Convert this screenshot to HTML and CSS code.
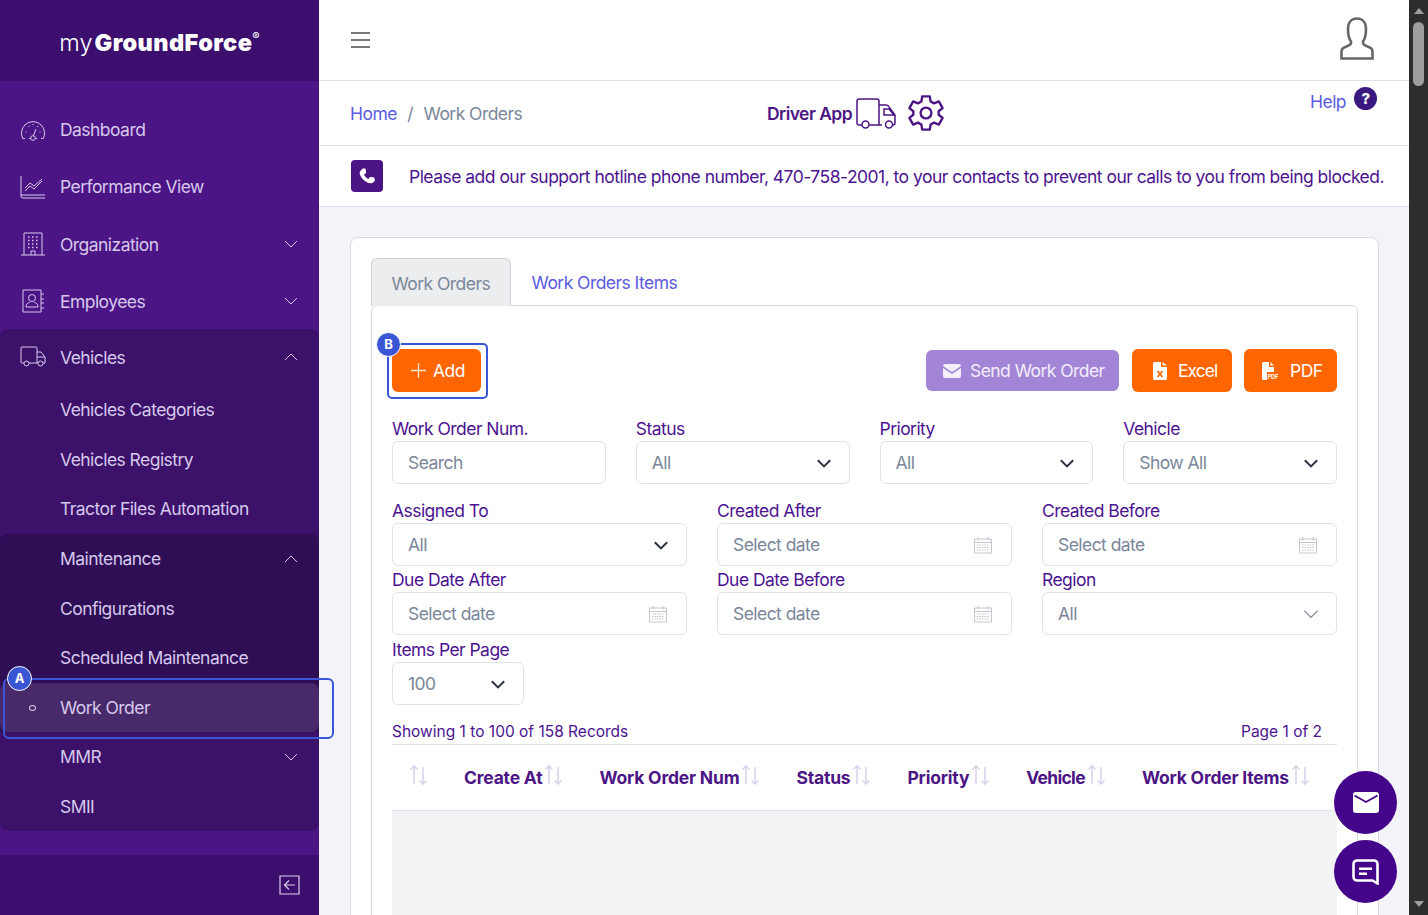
FILE: index.html
```html
<!DOCTYPE html>
<html lang="en">
<head>
    <meta charset="UTF-8">
    <meta name="viewport" content="width=device-width, initial-scale=1.0">
    <title>Work Orders</title>
    <link rel="stylesheet" href="styles.css">
</head>
<body>
    <!-- shared icons -->
    <svg class="defs" width="0" height="0">
        <symbol id="i-down" viewBox="0 0 16 16"><path d="M2 5l6 6 6-6" fill="none" stroke="currentColor" stroke-width="1"/></symbol>
        <symbol id="i-up" viewBox="0 0 16 16"><path d="M2 11l6-6 6 6" fill="none" stroke="currentColor" stroke-width="1"/></symbol>
        <symbol id="i-select" viewBox="0 0 16 16"><path d="M2.5 5.5L8 11l5.5-5.5" fill="none" stroke="currentColor" stroke-width="1.8"/></symbol>
        <symbol id="i-sort" viewBox="0 0 19 21"><path d="M5 20V2M1.500 5.500L5 2l3.500 3.500" fill="none" stroke="#ddd2ec" stroke-width="1.600"/><path d="M14 3v17M10.500 16.500L14 20l3.500-3.500" fill="none" stroke="#ddd2ec" stroke-width="1.600"/></symbol>
        <symbol id="i-cal" viewBox="0 0 20 18"><path d="M1.500 3h17v14h-17zM1.500 6.500h17M5 1v3.500M15 1v3.500" fill="none" stroke="#c4c6cc"/><path d="M4 9h12M4 11.500h12M4 14h12" stroke="#c4c6cc" stroke-dasharray="1.500 1"/></symbol>
    </svg>

    <div class="app">
        <aside class="sidebar">
            <div class="logo">
                <span class="logo-my">my</span><span class="logo-name">GroundForce</span><sup class="logo-reg">®</sup>
            </div>

            <nav class="nav">
                <a class="nav-item tall">
                    <svg class="nav-icon" viewBox="0 0 26 24"><path d="M5 20.500H2.800A11.500 11.500 0 1 1 23.200 20.500H21M9 20.500h1.500M15.500 20.500H17M13.500 17.500l2.500-6.500" fill="none" stroke="currentColor"/><circle cx="13" cy="20" r="2.300" fill="none" stroke="currentColor"/><path d="M5.500 14h1M8.500 8.500h1M19.500 14h1M12.500 6.500h1M17 8.500h1" stroke="currentColor" stroke-width="1.200"/></svg>
                    <span>Dashboard</span>
                </a>
                <a class="nav-item tall">
                    <svg class="nav-icon" viewBox="0 0 26 24"><path d="M1 1v20a2 2 0 0 0 2 2h22M1 20h24M5 16l5-5 4 3 8-8M5 13l5-5 4 3 8-7" fill="none" stroke="currentColor"/></svg>
                    <span>Performance View</span>
                </a>
                <a class="nav-item tall">
                    <svg class="nav-icon" viewBox="0 0 26 24"><path d="M4 23V1h18v22M1 23h24M11 23v-4h4v4" fill="none" stroke="currentColor"/><path d="M8 5h10M8 8.500h10M8 12h10M8 15.500h10" stroke="currentColor" stroke-width="1.300" stroke-dasharray="1.500 2.500"/></svg>
                    <span>Organization</span>
                    <svg class="caret"><use href="#i-down"/></svg>
                </a>
                <a class="nav-item tall">
                    <svg class="nav-icon" viewBox="0 0 26 24"><path d="M3 1h18v22H3zM21 5h3M21 10h3M21 14h3M21 19h3" fill="none" stroke="currentColor"/><circle cx="12" cy="9" r="3.500" fill="none" stroke="currentColor"/><path d="M6 18c0-4 3-4 4-5M18 18c0-4-3-4-4-5M6 18h12" fill="none" stroke="currentColor"/></svg>
                    <span>Employees</span>
                    <svg class="caret"><use href="#i-down"/></svg>
                </a>

                <div class="nav-group">
                    <a class="nav-item head">
                        <svg class="nav-icon" viewBox="0 0 26 24"><path d="M4 18H2a1 1 0 0 1-1-1V3a1 1 0 0 1 1-1h14a1 1 0 0 1 1 1v15H9M17 7h4l4 5v6h-2M17 18h1M17 12h8" fill="none" stroke="currentColor"/><circle cx="6.500" cy="18.500" r="2.500" fill="none" stroke="currentColor"/><circle cx="20.500" cy="18.500" r="2.500" fill="none" stroke="currentColor"/></svg>
                        <span>Vehicles</span>
                        <svg class="caret"><use href="#i-up"/></svg>
                    </a>
                    <a class="nav-item sub">Vehicles Categories</a>
                    <a class="nav-item sub">Vehicles Registry</a>
                    <a class="nav-item sub">Tractor Files Automation</a>

                    <div class="nav-nested">
                        <a class="nav-item sub">
                            <span>Maintenance</span>
                            <svg class="caret"><use href="#i-up"/></svg>
                        </a>
                        <a class="nav-item sub">Configurations</a>
                        <a class="nav-item sub">Scheduled Maintenance</a>
                        <a class="nav-item sub active">
                            <i class="dot"></i>
                            <span>Work Order</span>
                            <b class="marker marker-a"></b>
                            <b class="badge badge-a">A</b>
                        </a>
                    </div>

                    <a class="nav-item sub">
                        <span>MMR</span>
                        <svg class="caret"><use href="#i-down"/></svg>
                    </a>
                    <a class="nav-item sub">SMII</a>
                </div>
            </nav>

            <div class="sidebar-foot">
                <svg width="21" height="20" viewBox="0 0 21 20"><path d="M1 1h19v18H1zM16 10H6M10 5.500L5.500 10l4.500 4.500" fill="none" stroke="#d9cdee" stroke-width="1.200"/></svg>
            </div>
        </aside>

        <main class="main">
            <header class="topbar">
                <div class="burger"><i></i><i></i><i></i></div>
                <svg class="user" width="34" height="43" viewBox="0 0 34 43"><path d="M1.500 41.500v-7c0-3 2-3.800 6-5.500 3-1.300 4-2 3.500-4.500C8.500 21 8 17 8 12c0-7 4-10.500 9-10.500S26 5 26 12c0 5-.5 9-3 12.500-.5 2.500.5 3.200 3.500 4.500 4 1.700 6 2.500 6 5.500v7z" fill="none" stroke="#666" stroke-width="2.600"/></svg>
            </header>

            <div class="crumbs-bar">
                <div class="crumbs">
                    <a class="link">Home</a>
                    <span class="sep">/</span>
                    <span class="current">Work Orders</span>
                </div>
                <div class="driver">
                    <b>Driver App</b>
                    <svg width="41" height="31" viewBox="0 0 41 31"><path d="M6 27H3a2 2 0 0 1-2-2V3a2 2 0 0 1 2-2h18a2 2 0 0 1 2 2v24H13M23 7h7a3 3 0 0 1 3 2l6 8v8a2 2 0 0 1-2 2M23 27h3M28 11h5l5 6H28z" fill="none" stroke="#4c1585" stroke-width="1.500"/><circle cx="9.500" cy="26.500" r="3.500" fill="none" stroke="#4c1585" stroke-width="1.500"/><circle cx="33" cy="26.500" r="3.500" fill="none" stroke="#4c1585" stroke-width="1.500"/></svg>
                    <svg class="gear" width="38" height="38" viewBox="0 0 24 24"><path d="M9.600 1.500h4.800l.5 3.200 2.200 1.200 3-1.200 2.400 4.200-2.500 2v2.200l2.500 2-2.400 4.200-3-1.200-2.200 1.200-.5 3.200H9.600l-.5-3.200-2.200-1.200-3 1.200-2.400-4.200 2.500-2v-2.200l-2.500-2 2.400-4.200 3 1.200 2.200-1.200z" fill="none" stroke="#4c1585" stroke-width="1.500" stroke-linejoin="round"/><circle cx="12" cy="12" r="3.400" fill="none" stroke="#4c1585" stroke-width="1.500"/></svg>
                </div>
                <div class="help">
                    <a class="link">Help</a>
                    <span class="help-icon">?</span>
                </div>
            </div>

            <div class="notice">
                <span class="notice-icon">
                    <svg width="18" height="18" viewBox="0 0 24 24"><path d="M6.600 1.500l3 .8c.5.2.8.6.8 1.100l.3 4.100c0 .4-.2.800-.5 1L8 9.900c1 2.600 3.300 5 6 6.100l1.500-2.200c.2-.3.600-.5 1-.5l4.100.3c.5 0 .9.300 1.100.8l.8 3c.2.700-.1 1.400-.7 1.800l-2.800 2c-.7.500-1.600.7-2.400.5C9.500 20.400 3.700 14.600 2.300 8.500c-.2-.8 0-1.700.5-2.400l2-2.800c.4-.6 1.100-1 1.800-.8z" fill="#fff"/></svg>
                </span>
                <span>Please add our support hotline phone number, 470-758-2001, to your contacts to prevent our calls to you from being blocked.</span>
            </div>

            <div class="content">
                <section class="card">
                    <div class="tabs">
                        <a class="tab tab-on">Work Orders</a>
                        <a class="tab link">Work Orders Items</a>
                    </div>

                    <div class="pane">
                        <div class="actions">
                            <button class="btn btn-add">
                                <svg width="17" height="17" viewBox="0 0 17 17"><path d="M8.500 1v15M1 8.500h15" stroke="#ffe6d2" stroke-width="1.300"/></svg>
                                Add
                                <b class="marker marker-b"></b>
                                <b class="badge badge-b">B</b>
                            </button>
                            <div class="actions-right">
                                <button class="btn btn-send">
                                    <svg width="18" height="14" viewBox="0 0 18 14"><path d="M2 0h14a2 2 0 0 1 2 2L9 8 0 2a2 2 0 0 1 2-2zM0 4l9 6 9-6v8a2 2 0 0 1-2 2H2a2 2 0 0 1-2-2z" fill="#f4effb"/></svg>
                                    Send Work Order
                                </button>
                                <button class="btn btn-excel">
                                    <svg width="14" height="18" viewBox="0 0 14 18"><path d="M1.500 0H8v5h6v11.500a1.500 1.500 0 0 1-1.500 1.500h-11A1.500 1.500 0 0 1 0 16.500v-15A1.500 1.500 0 0 1 1.500 0zM9.500 0L14 3.500H9.500z" fill="#fff"/><path d="M4.500 9l5 6M9.500 9l-5 6" stroke="#ff6600" stroke-width="1.600"/></svg>
                                    Excel
                                </button>
                                <button class="btn btn-pdf">
                                    <svg width="18" height="18" viewBox="0 0 18 18"><path d="M1.500 0H7v5h5v5H5v8H1.500A1.500 1.500 0 0 1 0 16.500v-15A1.500 1.500 0 0 1 1.500 0zM8.500 0L12 3.500H8.500z" fill="#fff"/><text x="5.500" y="16.500" font-size="5.500" font-weight="700" letter-spacing="0" fill="#fff">PDF</text></svg>
                                    PDF
                                </button>
                            </div>
                        </div>

                        <div class="filters cols-4">
                            <div class="field"><label>Work Order Num.</label><div class="control">Search</div></div>
                            <div class="field"><label>Status</label><div class="control">All<svg class="arrow"><use href="#i-select"/></svg></div></div>
                            <div class="field"><label>Priority</label><div class="control">All<svg class="arrow"><use href="#i-select"/></svg></div></div>
                            <div class="field"><label>Vehicle</label><div class="control">Show All<svg class="arrow"><use href="#i-select"/></svg></div></div>
                        </div>
                        <div class="filters cols-3">
                            <div class="field"><label>Assigned To</label><div class="control">All<svg class="arrow"><use href="#i-select"/></svg></div></div>
                            <div class="field"><label>Created After</label><div class="control">Select date<svg class="cal"><use href="#i-cal"/></svg></div></div>
                            <div class="field"><label>Created Before</label><div class="control">Select date<svg class="cal"><use href="#i-cal"/></svg></div></div>
                            <div class="field"><label>Due Date After</label><div class="control">Select date<svg class="cal"><use href="#i-cal"/></svg></div></div>
                            <div class="field"><label>Due Date Before</label><div class="control">Select date<svg class="cal"><use href="#i-cal"/></svg></div></div>
                            <div class="field"><label>Region</label><div class="control">All<svg class="arrow thin"><use href="#i-down"/></svg></div></div>
                            <div class="field per-page"><label>Items Per Page</label><div class="control">100<svg class="arrow"><use href="#i-select"/></svg></div></div>
                        </div>

                        <div class="records">
                            <span>Showing 1 to 100 of 158 Records</span>
                            <span>Page 1 of 2</span>
                        </div>

                        <div class="thead">
                            <div class="th"><svg class="sort"><use href="#i-sort"/></svg></div>
                            <div class="th">Create At<svg class="sort"><use href="#i-sort"/></svg></div>
                            <div class="th">Work Order Num<svg class="sort"><use href="#i-sort"/></svg></div>
                            <div class="th">Status<svg class="sort"><use href="#i-sort"/></svg></div>
                            <div class="th">Priority<svg class="sort"><use href="#i-sort"/></svg></div>
                            <div class="th th-vehicle">Vehicle<svg class="sort"><use href="#i-sort"/></svg></div>
                            <div class="th">Work Order Items<svg class="sort"><use href="#i-sort"/></svg></div>
                        </div>
                        <div class="tbody"></div>
                    </div>
                </section>
            </div>

            <div class="fabs">
                <a class="fab">
                    <svg width="26" height="21" viewBox="0 0 26 21"><path d="M3 0h20a3 3 0 0 1 3 3v15a3 3 0 0 1-3 3H3a3 3 0 0 1-3-3V3a3 3 0 0 1 3-3z" fill="#fff"/><path d="M1.500 3.500L13 10l11.500-6.500" fill="none" stroke="#44058a" stroke-width="1.800"/></svg>
                </a>
                <a class="fab">
                    <svg width="27" height="26" viewBox="0 0 27 26"><path d="M5 1.500h17A3.500 3.500 0 0 1 25.500 5v19.500l-5-3H5A3.500 3.500 0 0 1 1.500 18V5A3.500 3.500 0 0 1 5 1.500z" fill="none" stroke="#fff" stroke-width="2.600"/><path d="M7 8.500h13v2.500H7zM7 13.500h8V16H7z" fill="#fff"/></svg>
                </a>
            </div>
        </main>

        <div class="scrollbar">
            <i class="arrow-up"></i>
            <i class="thumb"></i>
            <i class="arrow-down"></i>
        </div>
    </div>
</body>
</html>
```

FILE: styles.css
```css
* {
    margin: 0;
    padding: 0;
    box-sizing: border-box;
}

html, body {
    height: 100%;
    overflow: hidden;
}

body {
    font-family: Inter, "Noto Sans", sans-serif;
    font-size: 17.5px;
    letter-spacing: -0.55px;
    background: #f2f4f9;
}

.defs {
    position: absolute;
}

.app {
    display: flex;
    height: 915px;
}

/* Sidebar */
.sidebar {
    width: 319px;
    flex-shrink: 0;
    height: 915px;
    display: flex;
    flex-direction: column;
    background: #4c1585;
    color: #d6c9ec;
    position: relative;
    z-index: 2;
}

.logo {
    height: 81px;
    background: #3c0f6e;
    color: white;
    display: flex;
    justify-content: center;
    align-items: center;
    padding-top: 3px;
    letter-spacing: 0;
}

.logo-my {
    font-size: 23.5px;
    font-weight: 300;
}

.logo-name {
    font-size: 23.5px;
    font-weight: 900;
    margin-left: 2px;
    letter-spacing: 0.4px;
}

.logo-reg {
    font-size: 11px;
    margin-bottom: 12px;
}

.nav {
    flex: 1;
    padding-top: 20px;
}

.nav-item {
    display: flex;
    align-items: center;
    height: 49.6px;
    padding-left: 60px;
    padding-right: 20px;
    position: relative;
}

.nav-item.tall {
    height: 57.25px;
    padding-left: 20px;
}

.nav-item.head {
    height: 56px;
    padding-left: 20px;
}

.nav-icon {
    width: 26px;
    height: 24px;
    margin-right: 14px;
    flex-shrink: 0;
}

.caret {
    width: 16px;
    height: 16px;
    margin-left: auto;
}

.nav-group {
    background: #3c1169;
    border-radius: 8px;
    margin-top: -1px;
}

.nav-nested {
    background: #2f0e55;
    border-radius: 8px 8px 0 0;
}

.active {
    background: #482a6b;
    border-radius: 8px;
}

.dot {
    position: absolute;
    left: 29px;
    top: 22px;
    width: 7px;
    height: 6px;
    border: 1px solid #d6c9ec;
    border-radius: 50%;
}

.marker {
    position: absolute;
    border: 2px solid #3a56d4;
    pointer-events: none;
}

.marker-a {
    left: 3px;
    top: -5px;
    width: 331px;
    height: 61px;
    border-radius: 6px;
}

.marker-b {
    left: -5px;
    top: -6px;
    width: 101px;
    height: 56px;
    border-radius: 5px;
}

.badge {
    position: absolute;
    width: 25px;
    height: 25px;
    border-radius: 50%;
    background: #3a56d4;
    border: 1.500px solid white;
    color: white;
    font-size: 13px;
    font-weight: 700;
    line-height: 22px;
    text-align: center;
    letter-spacing: 0;
}

.badge-a {
    left: 7px;
    top: -17px;
}

.badge-b {
    left: -16px;
    top: -17px;
}

.sidebar-foot {
    height: 60px;
    background: #3c0f6e;
    display: flex;
    justify-content: flex-end;
    align-items: center;
    padding-right: 19px;
}

/* Main */
.main {
    flex: 1;
    min-width: 0;
    position: relative;
    display: flex;
    flex-direction: column;
    overflow: hidden;
}

.link {
    color: #5b5be0;
}

.topbar {
    height: 81px;
    flex-shrink: 0;
    background: white;
    border-bottom: 1px solid #dee2ec;
    display: flex;
    justify-content: space-between;
    align-items: center;
    padding: 0 35px 1px 32px;
}

.user {
    margin-bottom: 2px;
}

.burger {
    width: 19px;
}

.burger i {
    display: block;
    height: 2px;
    background: #777;
    margin: 5px 0;
}

.crumbs-bar {
    height: 65px;
    flex-shrink: 0;
    background: white;
    border-bottom: 1px solid #dee2ec;
    display: flex;
    align-items: center;
    padding: 0 32px 0 31px;
}

.crumbs {
    display: flex;
    gap: 10.5px;
    width: 417px;
}

.current {
    color: #7a8699;
}

.sep {
    color: #7a8699;
}

.driver {
    display: flex;
    align-items: center;
    gap: 4px;
    color: #4c1585;
}

.driver b {
    font-weight: 600;
}

.gear {
    margin-left: 6px;
}

.help {
    margin-left: auto;
    display: flex;
    align-items: center;
    gap: 8px;
    margin-top: -24px;
}

.help-icon {
    width: 23px;
    height: 23px;
    border-radius: 50%;
    background: #3a1a80;
    color: white;
    font-size: 15px;
    font-weight: 800;
    line-height: 23px;
    text-align: center;
    margin-top: -6px;
}

.notice {
    height: 61px;
    flex-shrink: 0;
    background: white;
    border-bottom: 1px solid #dee2ec;
    display: flex;
    align-items: center;
    gap: 26px;
    padding-left: 32px;
    color: #4c1391;
    white-space: nowrap;
    letter-spacing: -0.525px;
}

.notice-icon {
    width: 32px;
    height: 32px;
    border-radius: 4px;
    background: #4c1585;
    display: flex;
    justify-content: center;
    align-items: center;
    flex-shrink: 0;
}

.content {
    flex: 1;
    padding: 30px 30px 0 31px;
}

.card {
    background: white;
    border: 1px solid #d8d9de;
    border-radius: 8px;
    height: 800px;
    padding: 20px 20px 0 20px;
}

.tabs {
    display: flex;
    height: 48px;
}

.tab {
    height: 48px;
    padding: 0 21px;
    line-height: 49px;
}

.tab-on {
    background: #ebedef;
    border: 1px solid #cfd2d6;
    border-bottom: none;
    border-radius: 6px 6px 0 0;
    color: #7a8699;
    padding: 0 19.5px;
}

.pane {
    border: 1px solid #d8d9de;
    border-radius: 6px 6px 0 0;
    height: 700px;
    padding: 43px 20px 0 20px;
    margin-top: -1px;
}

.actions {
    display: flex;
    justify-content: space-between;
    align-items: center;
    height: 43px;
    margin-bottom: 24px;
}

.actions-right {
    display: flex;
    align-items: center;
    gap: 12px;
}

.btn {
    font: inherit;
    letter-spacing: inherit;
    border: none;
    color: white;
    border-radius: 6px;
    height: 43px;
    display: inline-flex;
    align-items: center;
    position: relative;
    background: #ff6600;
}

.btn-add {
    width: 89px;
    padding-left: 18px;
    gap: 6px;
}

.btn-send {
    background: #a285d6;
    width: 193px;
    height: 41px;
    padding-left: 17px;
    gap: 9px;
    color: #f4effb;
    margin-right: 1px;
}

.btn-excel {
    width: 100px;
    padding-left: 21px;
    gap: 11px;
    letter-spacing: -1px;
}

.btn-pdf {
    width: 93px;
    padding-left: 18px;
    gap: 10px;
}

.filters {
    display: grid;
    column-gap: 30px;
    row-gap: 1px;
    margin-bottom: 14px;
}

.cols-4 {
    grid-template-columns: repeat(4, 1fr);
}

.cols-3 {
    grid-template-columns: repeat(3, 1fr);
    margin-bottom: 0;
}

.field label {
    display: block;
    height: 25px;
    line-height: 25px;
    color: #4c1391;
}

.per-page {
    margin-top: 1px;
}

.per-page .control {
    width: 132px;
}

.control {
    height: 43px;
    border: 1px solid #dee2ec;
    border-radius: 6px;
    display: flex;
    align-items: center;
    padding: 0 15px;
    color: #7a8699;
}

.arrow {
    width: 18px;
    height: 18px;
    margin-left: auto;
    margin-right: 1px;
    color: #2c3240;
}

.arrow.thin {
    color: #7a8699;
}

.cal {
    width: 20px;
    height: 18px;
    margin-left: auto;
    margin-right: 3px;
}

.records {
    display: flex;
    justify-content: space-between;
    padding-right: 15px;
    margin-top: 14px;
    height: 26px;
    line-height: 25px;
    font-size: 15.5px;
    letter-spacing: 0;
    color: #4c1391;
    border-bottom: 1px solid #dee2ec;
}

.thead {
    display: flex;
    align-items: center;
    gap: 36px;
    height: 66px;
    padding-left: 17px;
    border-bottom: 1px solid #dee2ec;
    color: #4c1585;
    font-weight: 700;
    letter-spacing: -0.2px;
}

.th {
    display: flex;
    align-items: center;
    gap: 2px;
}

.th-vehicle {
    letter-spacing: -0.7px;
}

.sort {
    width: 19px;
    height: 21px;
    margin-top: -6px;
}

.tbody {
    height: 200px;
    background: #f1f3f4;
}

/* Floating buttons */
.fabs {
    position: absolute;
    right: 12px;
    top: 771px;
    display: flex;
    flex-direction: column;
    gap: 6px;
}

.fab {
    width: 63px;
    height: 63px;
    border-radius: 50%;
    background: #44058a;
    display: flex;
    justify-content: center;
    align-items: center;
}

/* Scrollbar */
.scrollbar {
    width: 19px;
    flex-shrink: 0;
    background: #2d2d2d;
    display: flex;
    flex-direction: column;
    align-items: center;
    padding: 8px 0;
}

.arrow-up, .arrow-down {
    width: 0;
    height: 0;
    border-left: 5px solid transparent;
    border-right: 5px solid transparent;
}

.arrow-up {
    border-bottom: 6px solid #9e9e9e;
}

.arrow-down {
    border-top: 6px solid #9e9e9e;
    margin-top: auto;
}

.thumb {
    width: 11px;
    height: 64px;
    background: #9e9e9e;
    border-radius: 6px;
    margin-top: 8px;
}
```
